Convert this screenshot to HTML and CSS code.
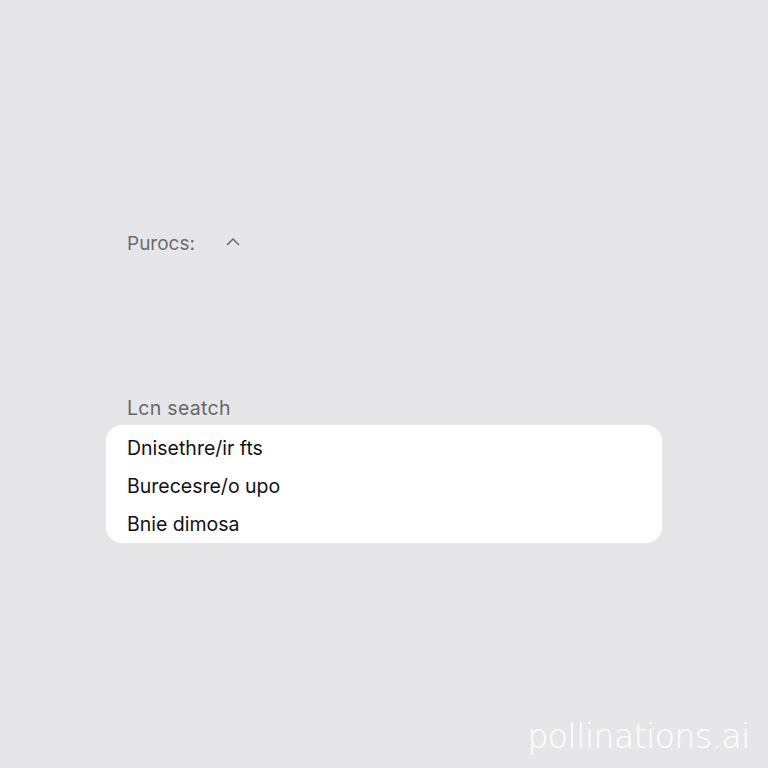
FILE: index.html
```html
<!DOCTYPE html>
<html>
<head>
<meta charset="utf-8">
<link rel="stylesheet" href="styles.css">
</head>
<body>
<main class="page">
  <div class="header-row">
    <span class="header-label">Purocs:</span>
    <svg class="chevron" width="14" height="9" viewBox="0 0 14 9"><path d="M1.5 7.5 L7 2 L12.5 7.5" fill="none" stroke="#6a6a70" stroke-width="1.6" stroke-linecap="round" stroke-linejoin="round"/></svg>
  </div>
  <section class="search">
    <div class="search-label">Lcn seatch</div>
    <ul class="card">
      <li>Dnisethre/ir fts</li>
      <li>Burecesre/o upo</li>
      <li>Bnie dimosa</li>
    </ul>
  </section>
</main>
<div class="watermark">pollinations.ai</div>
</body>
</html>
```
FILE: styles.css
```css
html, body {
  margin: 0;
  height: 100%;
}
body {
  background: #e6e6e9;
  font-family: "Inter", "Liberation Sans", Arial, sans-serif;
  position: relative;
  overflow: hidden;
}
.page {
  padding: 230px 0 0 106px;
}
.header-row {
  display: flex;
  align-items: center;
  gap: 31px;
  padding-left: 21px;
  height: 26px;
}
.header-label {
  font-size: 19px;
  color: #6c6c72;
}
.chevron {
  margin-top: -4px;
}
.search {
  margin-top: 139px;
  width: 556px;
}
.search-label {
  font-size: 19.5px;
  color: #66666b;
  padding-left: 21px;
  height: 30px;
  line-height: 26px;
  letter-spacing: 0.3px;
}
.card {
  list-style: none;
  margin: 0;
  padding: 4px 0 6px 21px;
  background: #ffffff;
  border-radius: 16px;
  height: 108px;
  display: flex;
  flex-direction: column;
}
.card li {
  font-size: 19.5px;
  color: #111114;
  height: 38.5px;
  line-height: 38px;
}
.watermark {
  position: absolute;
  right: 18px;
  bottom: 12px;
  font-size: 33px;
  color: #ffffff;
  font-family: "DejaVu Sans", sans-serif;
  font-weight: 300;
  letter-spacing: -0.5px;
}
```
